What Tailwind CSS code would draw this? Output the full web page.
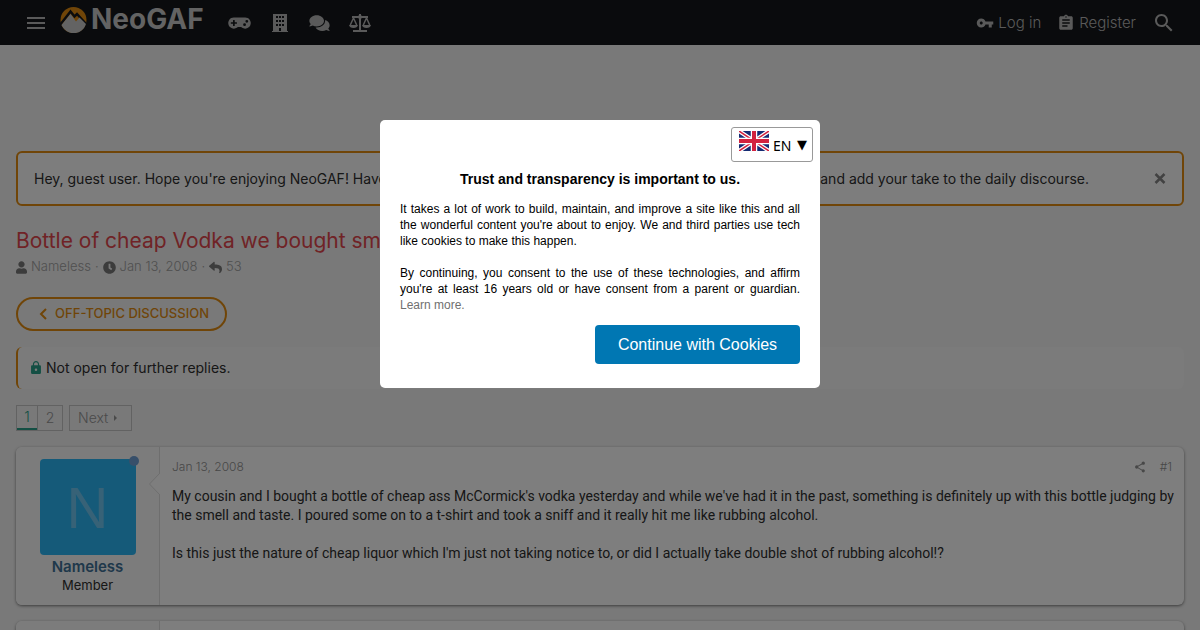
<!DOCTYPE html>
<html lang="en">
<head>
<meta charset="utf-8">
<meta name="viewport" content="width=device-width, initial-scale=1">
<title>Bottle of cheap Vodka | NeoGAF</title>
<script src="https://cdn.jsdelivr.net/npm/@tailwindcss/browser@4"></script>
</head>
<body class="h-screen overflow-hidden bg-[#f2f2f2] font-['Inter',sans-serif] text-[#2e2e2e]">
<header class="flex h-[45px] items-center justify-between bg-[#14171a] pr-6 pl-6 text-[#b4b4b4]">
  <div class="flex items-center">
    <button type="button" aria-label="Menu" class="block"><svg class="size-6" viewBox="0 0 24 24" fill="currentColor"><path d="M3 18h18v-2H3v2zm0-5h18v-2H3v2zm0-7v2h18V6H3z"/></svg></button>
    <a href="#" class="ml-3 flex h-[45px] items-start gap-1 pt-1.5 text-[#c6c6c6]">
      <svg class="size-[27px]" viewBox="0 0 27 27"><circle cx="13.5" cy="14" r="13" fill="#e08b10"/><path d="M0 19 10.500 5.500l4 5 2.500-2.500L27 19" fill="none" stroke="#14171a" stroke-width="2.500"/><path d="M1.500 19 10.500 8l5.500 7.500 3.500-4L26 18A13 13 0 0 1 1.500 19z" fill="#c6c6c6"/></svg>
      <span class="text-[28px] leading-[27px] font-bold">NeoGAF</span>
    </a>
    <nav class="ml-6 flex items-center gap-4">
      <a href="#" aria-label="Gaming" class="flex w-6 justify-center"><svg class="h-[18px] w-[23px]" viewBox="0 0 640 512" fill="currentColor"><path d="M480.070 96H160a160 160 0 1 0 114.240 272h91.520A160 160 0 1 0 480.070 96zM248 268a12 12 0 0 1-12 12h-52v52a12 12 0 0 1-12 12h-24a12 12 0 0 1-12-12v-52H84a12 12 0 0 1-12-12v-24a12 12 0 0 1 12-12h52v-52a12 12 0 0 1 12-12h24a12 12 0 0 1 12 12v52h52a12 12 0 0 1 12 12zm216 76a40 40 0 1 1 40-40 40 40 0 0 1-40 40zm64-96a40 40 0 1 1 40-40 40 40 0 0 1-40 40z"/></svg></a>
      <a href="#" aria-label="Off-topic" class="flex w-6 justify-center"><svg class="h-[18px] w-4" viewBox="0 0 16 18" fill="currentColor"><path fill-rule="evenodd" d="M1 0h14v17h1v1H0v-1h1zM4 2v2h2V2zm3 0v2h2V2zm3 0v2h2V2zM4 6v2h2V6zm3 0v2h2V6zm3 0v2h2V6zM4 10v2h2v-2zm3 0v2h2v-2zm3 0v2h2v-2zM7 14v3h2v-3z"/></svg></a>
      <a href="#" aria-label="Communities" class="flex w-6 justify-center"><svg class="h-[18px] w-[21px]" viewBox="0 0 576 512" fill="currentColor"><path d="M416 192c0-88.400-93.100-160-208-160S0 103.600 0 192c0 34.300 14.100 65.900 38 92-13.400 30.200-35.500 54.200-35.800 54.500-2.200 2.300-2.800 5.700-1.500 8.700S4.800 352 8 352c36.600 0 66.900-12.300 88.700-25 32.200 15.700 70.300 25 111.300 25 114.900 0 208-71.600 208-160zm122 220c23.900-26 38-57.700 38-92 0-66.900-53.500-124.200-129.300-148.100.9 6.600 1.300 13.300 1.300 20.100 0 105.900-107.700 192-240 192-10.800 0-21.300-.8-31.700-1.900C207.800 439.600 281.800 480 368 480c41 0 79.100-9.200 111.300-25 21.800 12.700 52.100 25 88.700 25 3.200 0 6.100-1.900 7.300-4.800 1.300-2.900.7-6.300-1.500-8.700-.3-.3-22.400-24.200-35.800-54.500z"/></svg></a>
      <a href="#" aria-label="Politics" class="flex w-6 justify-center"><svg class="h-[18px] w-[22px]" viewBox="0 0 22 18" fill="none" stroke="currentColor" stroke-width="2"><path d="M3 3h16M11 0v16M4 17h14"/><circle cx="11" cy="3" r="2" fill="currentColor" stroke="none"/><path d="M4.500 4 1.300 11M4.500 4l3.200 7M17.500 4l-3.200 7M17.500 4l3.200 7" stroke-width="1.500"/><path d="M0 11h9c-.4 2-2 3-4.500 3S.4 13 0 11zM13 11h9c-.4 2-2 3-4.500 3s-4.100-1-4.500-3z" fill="currentColor" stroke="none"/></svg></a>
    </nav>
  </div>
  <div class="flex items-center text-[15px] leading-5 font-light">
    <a href="#" class="flex items-center gap-1"><svg class="size-[18px]" viewBox="0 0 24 24" fill="currentColor"><path d="M12.650 10C11.830 7.670 9.610 6 7 6c-3.310 0-6 2.690-6 6s2.690 6 6 6c2.610 0 4.830-1.670 5.650-4H17v4h4v-4h2v-4H12.650zM7 14c-1.100 0-2-.9-2-2s.9-2 2-2 2 .9 2 2-.9 2-2 2z"/></svg>Log in</a>
    <a href="#" class="ml-4 flex items-center gap-1"><svg class="size-[18px]" viewBox="0 0 24 24" fill="currentColor"><path d="M19 3h-4.180C14.400 1.840 13.300 1 12 1c-1.300 0-2.400.84-2.820 2H5c-1.100 0-2 .9-2 2v14c0 1.100.9 2 2 2h14c1.100 0 2-.9 2-2V5c0-1.100-.9-2-2-2zm-7 0c.55 0 1 .45 1 1s-.45 1-1 1-1-.45-1-1 .45-1 1-1zm2 14H7v-2h7v2zm3-4H7v-2h10v2zm0-4H7V7h10v2z"/></svg>Register</a>
    <button type="button" aria-label="Search" class="ml-4"><svg class="size-6" viewBox="0 0 24 24" fill="currentColor"><path d="M15.500 14h-.79l-.28-.27C15.410 12.590 16 11.110 16 9.500 16 5.910 13.090 3 9.500 3S3 5.910 3 9.500 5.910 16 9.500 16c1.610 0 3.090-.59 4.230-1.570l.27.28v.79l5 4.990L20.490 19l-4.990-5zm-6 0C7.010 14 5 11.990 5 9.500S7.010 5 9.500 5 14 7.010 14 9.500 11.990 14 9.500 14z"/></svg></button>
  </div>
</header>

<main class="px-4 pt-[106px]">
  <div class="flex h-[55px] items-center justify-between rounded-md border-2 border-[#e08b10] bg-[#fbfbfb] pr-3.5 pl-4 text-sm">
    <p class="flex max-w-[1055px] flex-1 justify-between overflow-hidden whitespace-nowrap"><span>Hey, guest user. Hope you're enjoying NeoGAF! Have you</span><span>registered for an account yet? Come join us and add your take to the daily discourse.</span></p>
    <button type="button" aria-label="Dismiss notice" class="text-[#858585]"><svg class="size-4" viewBox="0 0 16 16" fill="none" stroke="currentColor" stroke-width="2.500"><path d="m3.500 3 9 9M12.500 3l-9 9"/></svg></button>
  </div>

  <h1 class="mt-5 text-[21px] leading-[30px] text-[#e0464c]">Bottle of cheap Vodka we bought smells like alcohol</h1>
  <div class="mt-px flex h-5 items-center gap-1 text-[13px] font-light text-[#a0a0a0]">
    <svg class="h-[13px] w-[11px] text-[#787878]" viewBox="0 0 448 512" fill="currentColor"><path d="M224 256c70.700 0 128-57.300 128-128S294.700 0 224 0 96 57.300 96 128s57.300 128 128 128zm89.600 32h-16.700c-22.200 10.200-46.900 16-72.900 16s-50.600-5.800-72.900-16h-16.700C60.200 288 0 348.200 0 422.400V464c0 26.500 21.500 48 48 48h352c26.500 0 48-21.500 48-48v-41.600c0-74.200-60.200-134.400-134.400-134.400z"/></svg>
    <a href="#">Nameless</a><span>·</span>
    <svg class="size-[13px] text-[#787878]" viewBox="0 0 512 512" fill="currentColor"><path d="M256 8C119 8 8 119 8 256s111 248 248 248 248-111 248-248S393 8 256 8zm57.100 350.100L224.900 294c-3.100-2.300-4.900-5.900-4.900-9.700V116c0-6.600 5.400-12 12-12h48c6.600 0 12 5.400 12 12v137.700l63.500 46.200c5.400 3.900 6.500 11.400 2.600 16.800l-28.200 38.800c-3.900 5.300-11.400 6.500-16.800 2.600z"/></svg>
    <a href="#">Jan 13, 2008</a><span>·</span>
    <svg class="size-[13px] text-[#787878]" viewBox="0 0 512 512" fill="currentColor"><path d="M8.309 189.836L184.313 37.851C199.719 24.546 224 35.347 224 56.015v80.053c160.629 1.839 288 34.032 288 186.258 0 61.441-39.581 122.309-83.333 154.132-13.653 9.931-33.111-2.533-28.077-18.631 45.344-145.012-21.507-183.510-176.590-185.742V360c0 20.700-24.300 31.453-39.687 18.164l-176.004-152c-11.071-9.562-11.086-26.753 0-36.328z"/></svg>
    <span>53</span>
  </div>

  <a href="#" class="mt-5 flex h-[34px] w-[211px] items-center justify-end gap-2 rounded-full border-2 border-[#e08b10] pr-4 text-[13px] font-medium whitespace-nowrap text-[#e08b10]"><svg class="h-3 w-2" viewBox="0 0 8 12" fill="none" stroke="currentColor" stroke-width="2"><path d="M7 1 2 6l5 5"/></svg>OFF-TOPIC DISCUSSION</a>

  <div class="mt-4 flex h-[42px] items-center gap-1 rounded-md border-l-2 border-[#e08b10] bg-[#f6f6f6] pl-3 text-sm"><svg class="mb-0.5 h-[13px] w-3 text-[#289f88]" viewBox="4 1 16 21" fill="currentColor"><path d="M18 8h-1V6c0-2.760-2.240-5-5-5S7 3.240 7 6v2H6c-1.100 0-2 .9-2 2v10c0 1.100.9 2 2 2h12c1.100 0 2-.9 2-2V10c0-1.100-.9-2-2-2zm-6 9c-1.100 0-2-.9-2-2s.9-2 2-2 2 .9 2 2-.9 2-2 2zm3.100-9H8.900V6c0-1.710 1.390-3.100 3.100-3.100 1.710 0 3.100 1.390 3.100 3.100v2z"/></svg>Not open for further replies.</div>

  <nav aria-label="Pages" class="mt-4 flex h-[26px] gap-1.5 text-sm font-light text-[#959595]">
    <div class="flex border border-[#c4c4c4]">
      <a href="#" class="flex w-5 items-center justify-center border-b-2 border-[#289f88] text-[#289f88]">1</a>
      <a href="#" class="flex w-[25px] items-center justify-center border-l border-[#c4c4c4]">2</a>
    </div>
    <a href="#" class="flex w-[63px] items-center gap-1.5 border border-[#c4c4c4] pl-2">Next<svg class="h-[6px] w-[3px]" viewBox="0 0 3 6" fill="currentColor"><path d="m0 0 3 3-3 3z"/></svg></a>
  </nav>

  <article class="mt-4 flex min-h-[158px] rounded-md bg-[#fdfdfd] shadow-[0_1px_3px_rgba(0,0,0,0.500)]">
    <div class="relative flex w-36 shrink-0 flex-col items-center rounded-l-md border-r border-[#dcdcdc] bg-[#f8f8f8] pt-3">
      <div class="relative flex size-24 items-center justify-center rounded bg-[#2ab4f2] font-['Liberation_Sans',sans-serif] text-[58px] text-[#6fc4ee]"><span>N</span><span class="absolute -top-[3px] -right-[3px] size-2.5 rounded-full bg-[#6e9fd4]"></span></div>
      <a href="#" class="mt-0.5 text-[15px] leading-5 font-semibold text-[#3f7096]">Nameless</a>
      <span class="text-[13px] leading-4">Member</span>
      <svg class="absolute top-[26px] -right-px h-[22px] w-[11px]" viewBox="0 0 11 22"><path d="M11 0 .500 11 11 22" fill="#fdfdfd" stroke="#dcdcdc"/></svg>
    </div>
    <div class="flex-1 pt-2.5 pr-2 pl-3">
      <div class="flex h-5 items-center justify-between pr-1 text-xs font-light text-[#909090]">
        <a href="#">Jan 13, 2008</a>
        <div class="flex items-center gap-3.5"><button type="button" aria-label="Share"><svg class="size-3" viewBox="2 1 20 22" fill="currentColor"><path d="M18 16.080c-.76 0-1.440.3-1.960.77L8.910 12.700c.05-.23.09-.46.09-.7s-.04-.47-.09-.7l7.050-4.110c.54.5 1.250.81 2.040.81 1.660 0 3-1.340 3-3s-1.340-3-3-3-3 1.340-3 3c0 .24.04.47.09.7L8.040 9.810C7.500 9.310 6.790 9 6 9c-1.660 0-3 1.340-3 3s1.340 3 3 3c.79 0 1.500-.31 2.040-.81l7.120 4.160c-.05.21-.08.43-.08.65 0 1.610 1.310 2.920 2.920 2.920s2.920-1.310 2.920-2.920-1.310-2.920-2.920-2.920z"/></svg></button><a href="#">#1</a></div>
      </div>
      <div class="mt-2.5 space-y-[19px] font-['Roboto',sans-serif] text-sm leading-[19px]">
        <p>My cousin and I bought a bottle of cheap ass McCormick's vodka yesterday and while we've had it in the past, something is definitely up with this bottle judging by the smell and taste. I poured some on to a t-shirt and took a sniff and it really hit me like rubbing alcohol.</p>
        <p>Is this just the nature of cheap liquor which I'm just not taking notice to, or did I actually take double shot of rubbing alcohol!?</p>
      </div>
    </div>
  </article>
  <article class="mt-4 flex h-40 rounded-md bg-[#fdfdfd] shadow-[0_1px_3px_rgba(0,0,0,0.500)]"><div class="w-36 rounded-l-md border-r border-[#dcdcdc] bg-[#f8f8f8]"></div></article>
</main>

<div class="fixed inset-0 flex items-start justify-center bg-black/50 pt-[120px]">
  <section role="dialog" aria-labelledby="consent-title" class="w-[440px] rounded-[5px] bg-white px-5 pt-[7px] pb-6 font-['Liberation_Sans',sans-serif] text-black">
    <div class="-mr-[13px] flex justify-end">
      <label class="flex h-[35px] w-[82px] items-center gap-1 rounded-[3px] border border-[#999] pl-[7px] text-sm">
        <svg class="mb-2 h-5 w-[30px] shrink-0" viewBox="0 0 60 40"><path fill="#152b73" d="M0 0h60v40H0z"/><path d="m0 0 60 40M60 0 0 40" stroke="#fff" stroke-width="8"/><path d="m0 0 60 40M60 0 0 40" stroke="#d3233f" stroke-width="3"/><path d="M30 0v40M0 20h60" stroke="#fff" stroke-width="13"/><path d="M30 0v40M0 20h60" stroke="#d3233f" stroke-width="8"/></svg>
        <select aria-label="Language" class="mt-0.5 w-5 shrink-0 appearance-none font-['Noto_Sans',sans-serif] leading-5"><option>EN</option></select>
        <span class="mt-0.5 font-['DejaVu_Sans',sans-serif] text-[13px]" aria-hidden="true">▼</span>
      </label>
    </div>
    <h2 id="consent-title" class="mt-[7px] text-center text-sm leading-5 font-bold">Trust and transparency is important to us.</h2>
    <div class="mt-3 space-y-4 text-justify text-xs leading-4">
      <p>It takes a lot of work to build, maintain, and improve a site like this and all the wonderful content you're about to enjoy. We and third parties use tech like cookies to make this happen.</p>
      <p>By continuing, you consent to the use of these technologies, and affirm you're at least 16 years old or have consent from a parent or guardian. <a href="#" class="text-[#707070]">Learn more.</a></p>
    </div>
    <div class="mt-3 flex justify-end"><button type="button" class="h-[39px] w-[205px] rounded bg-[#0077b3] text-base text-white">Continue with Cookies</button></div>
  </section>
</div>
</body>
</html>
